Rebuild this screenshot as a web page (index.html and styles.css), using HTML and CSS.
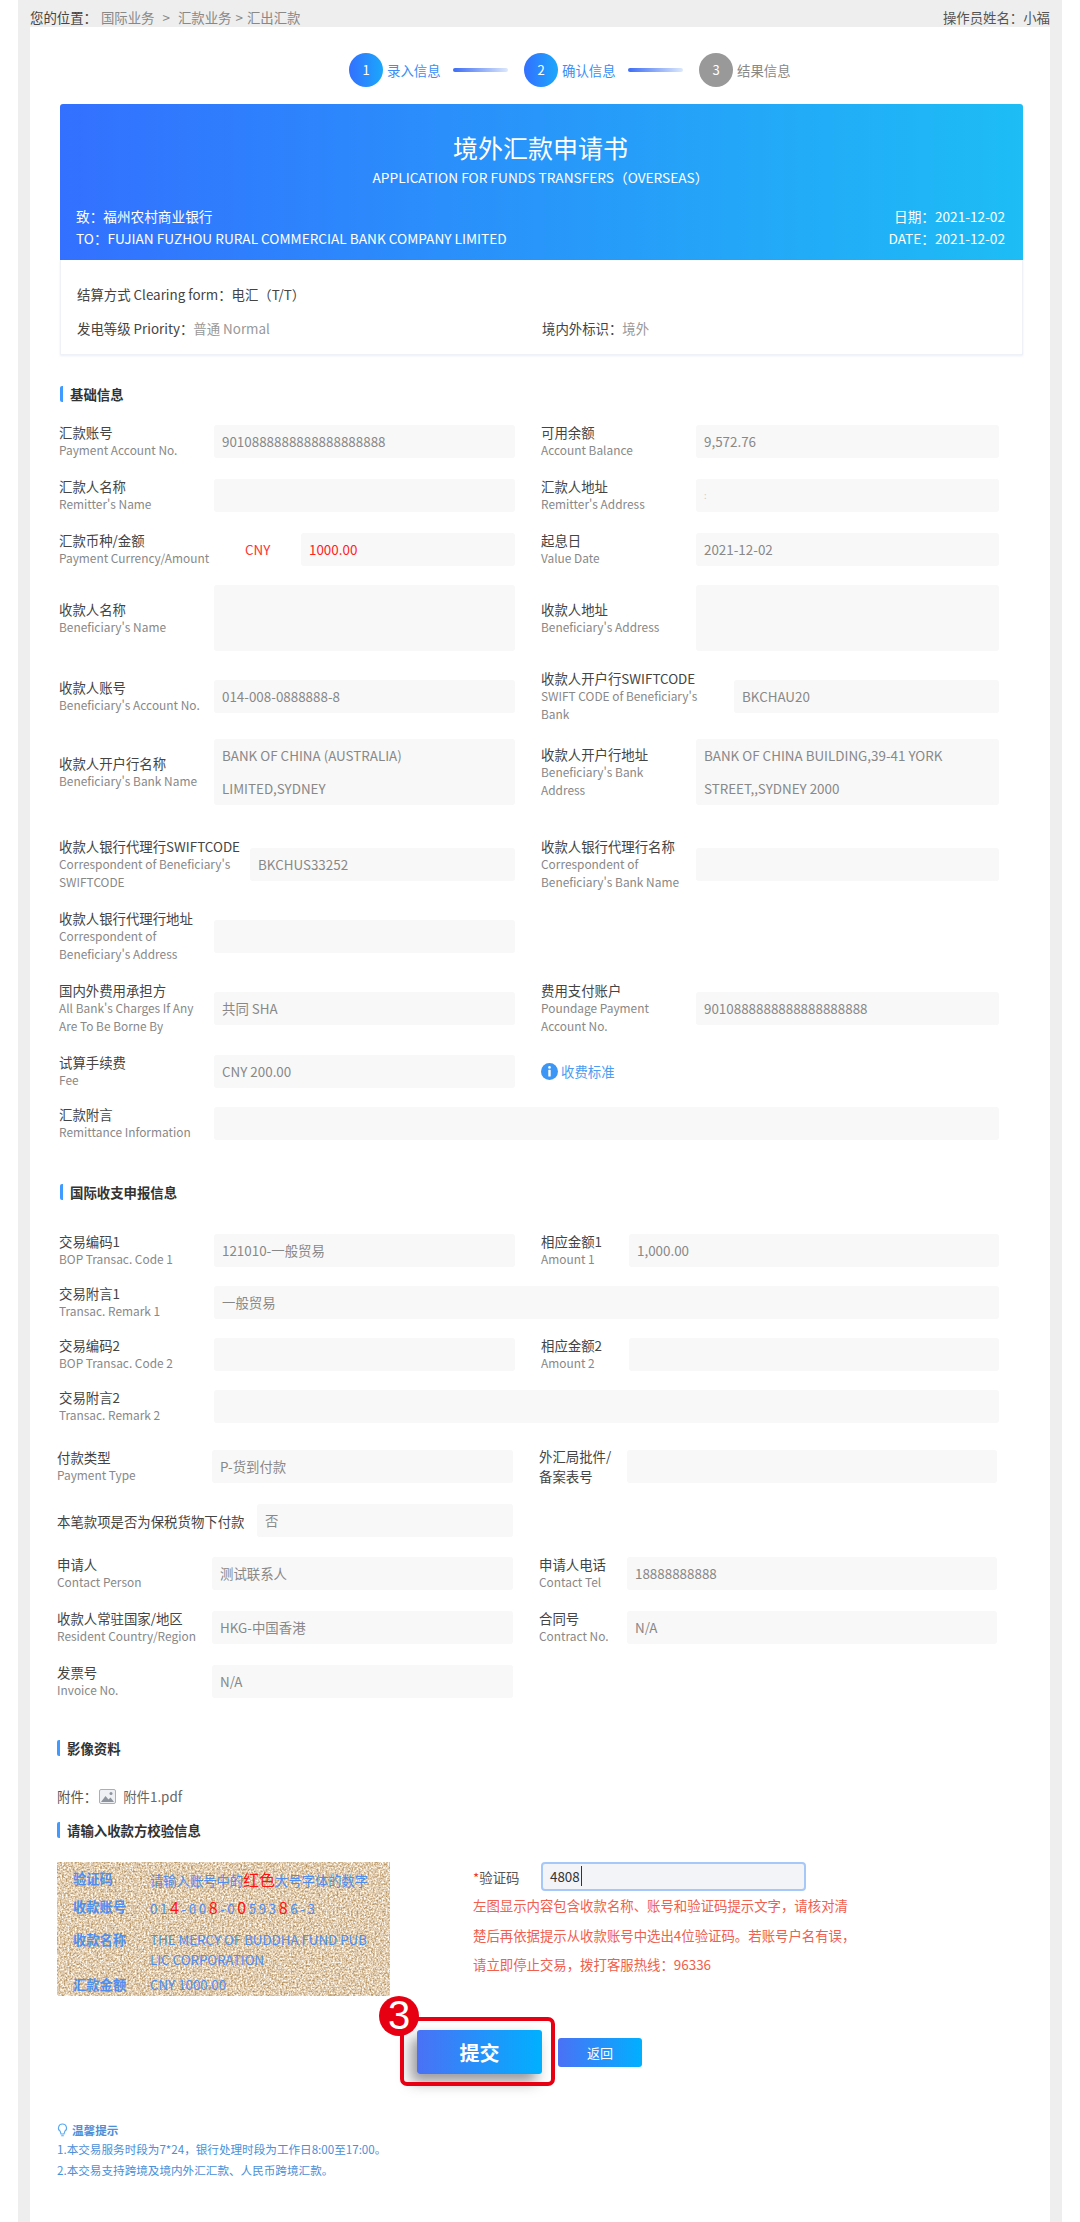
FILE: index.html
```html
<!DOCTYPE html>
<html lang="zh-CN">
<head>
  <meta charset="UTF-8">
  <title>境外汇款申请书</title>
  <link rel="stylesheet" href="styles.css">
</head>
<body>
<div class="page">
  <div class="topbar">
    <div class="crumbs"><b>您的位置：</b><span>国际业务</span><i>&gt;</i><span>汇款业务</span><i class="tight-sep">&gt;</i><span>汇出汇款</span></div>
    <div class="operator">操作员姓名：小福</div>
  </div>

  <div class="card">
    <!-- 步骤条 -->
    <div class="steps">
      <span class="step-num">1</span><span class="step-text">录入信息</span><span class="step-line"></span>
      <span class="step-num">2</span><span class="step-text">确认信息</span><span class="step-line"></span>
      <span class="step-num step-num-off">3</span><span class="step-text step-text-off">结果信息</span>
    </div>

    <!-- 申请书抬头 -->
    <div class="banner">
      <h1>境外汇款申请书</h1>
      <p class="banner-sub">APPLICATION FOR FUNDS TRANSFERS（OVERSEAS）</p>
      <div class="banner-line"><span>致：福州农村商业银行</span><span>日期：2021-12-02</span></div>
      <div class="banner-line"><span>TO：FUJIAN FUZHOU RURAL COMMERCIAL BANK COMPANY LIMITED</span><span>DATE：2021-12-02</span></div>
    </div>
    <div class="meta">
      <div class="meta-row">结算方式 Clearing form：电汇（T/T）</div>
      <div class="meta-row meta-two">
        <div>发电等级 Priority：<em>普通 Normal</em></div>
        <div>境内外标识：<em>境外</em></div>
      </div>
    </div>

    <!-- 基础信息 -->
    <h2 class="sec-title sec-basic">基础信息</h2>

    <div class="row">
      <div class="col"><div class="lbl">汇款账号<small>Payment Account No.</small></div><div class="field">9010888888888888888888</div></div>
      <div class="col col-r"><div class="lbl">可用余额<small>Account Balance</small></div><div class="field">9,572.76</div></div>
    </div>
    <div class="row">
      <div class="col"><div class="lbl">汇款人名称<small>Remitter's Name</small></div><div class="field"></div></div>
      <div class="col col-r"><div class="lbl">汇款人地址<small>Remitter's Address</small></div><div class="field field-faint">:</div></div>
    </div>
    <div class="row">
      <div class="col"><div class="lbl">汇款币种/金额<small>Payment Currency/Amount</small></div><div class="currency">CNY</div><div class="field field-red">1000.00</div></div>
      <div class="col col-r"><div class="lbl">起息日<small>Value Date</small></div><div class="field">2021-12-02</div></div>
    </div>
    <div class="row">
      <div class="col"><div class="lbl">收款人名称<small>Beneficiary's Name</small></div><div class="field field-tall"></div></div>
      <div class="col col-r"><div class="lbl">收款人地址<small>Beneficiary's Address</small></div><div class="field field-tall"></div></div>
    </div>
    <div class="row row-tight">
      <div class="col"><div class="lbl">收款人账号<small>Beneficiary's Account No.</small></div><div class="field">014-008-0888888-8</div></div>
      <div class="col col-r"><div class="lbl lbl-swift">收款人开户行SWIFTCODE<small>SWIFT CODE of Beneficiary's<br>Bank</small></div><div class="field">BKCHAU20</div></div>
    </div>
    <div class="row row-far">
      <div class="col"><div class="lbl">收款人开户行名称<small>Beneficiary's Bank Name</small></div><div class="field field-tall">BANK OF CHINA (AUSTRALIA)<br>LIMITED,SYDNEY</div></div>
      <div class="col col-r"><div class="lbl">收款人开户行地址<small>Beneficiary's Bank<br>Address</small></div><div class="field field-tall">BANK OF CHINA BUILDING,39-41 YORK<br>STREET,,SYDNEY 2000</div></div>
    </div>
    <div class="row">
      <div class="col"><div class="lbl lbl-corr">收款人银行代理行SWIFTCODE<small>Correspondent of Beneficiary's<br>SWIFTCODE</small></div><div class="field">BKCHUS33252</div></div>
      <div class="col col-r"><div class="lbl">收款人银行代理行名称<small>Correspondent of<br>Beneficiary's Bank Name</small></div><div class="field"></div></div>
    </div>
    <div class="row">
      <div class="col"><div class="lbl">收款人银行代理行地址<small>Correspondent of<br>Beneficiary's Address</small></div><div class="field"></div></div>
    </div>
    <div class="row">
      <div class="col"><div class="lbl">国内外费用承担方<small>All Bank's Charges If Any<br>Are To Be Borne By</small></div><div class="field">共同 SHA</div></div>
      <div class="col col-r"><div class="lbl">费用支付账户<small>Poundage Payment<br>Account No.</small></div><div class="field">9010888888888888888888</div></div>
    </div>
    <div class="row row-tight">
      <div class="col"><div class="lbl">试算手续费<small>Fee</small></div><div class="field">CNY 200.00</div></div>
      <div class="col col-r">
        <svg class="info-ico" viewBox="0 0 17 17"><circle cx="8.5" cy="8.5" r="8.5" fill="#3c96f5"/><circle cx="8.5" cy="4.4" r="1.3" fill="#fff"/><rect x="7.3" y="6.8" width="2.4" height="6.8" rx=".6" fill="#fff"/></svg>
        <span class="fee-link">收费标准</span>
      </div>
    </div>
    <div class="row">
      <div class="col col-full"><div class="lbl">汇款附言<small>Remittance Information</small></div><div class="field"></div></div>
    </div>

    <!-- 国际收支申报信息 -->
    <h2 class="sec-title sec-bop">国际收支申报信息</h2>

    <div class="row row-tight">
      <div class="col"><div class="lbl">交易编码1<small>BOP Transac. Code 1</small></div><div class="field">121010-一般贸易</div></div>
      <div class="col col-r"><div class="lbl lbl-short">相应金额1<small>Amount 1</small></div><div class="field">1,000.00</div></div>
    </div>
    <div class="row row-tight">
      <div class="col col-full"><div class="lbl">交易附言1<small>Transac. Remark 1</small></div><div class="field">一般贸易</div></div>
    </div>
    <div class="row row-tight">
      <div class="col"><div class="lbl">交易编码2<small>BOP Transac. Code 2</small></div><div class="field"></div></div>
      <div class="col col-r"><div class="lbl lbl-short">相应金额2<small>Amount 2</small></div><div class="field"></div></div>
    </div>
    <div class="row row-last">
      <div class="col col-full"><div class="lbl">交易附言2<small>Transac. Remark 2</small></div><div class="field"></div></div>
    </div>

    <div class="shifted">
      <div class="row">
        <div class="col"><div class="lbl">付款类型<small>Payment Type</small></div><div class="field">P-货到付款</div></div>
        <div class="col col-r"><div class="lbl lbl-short lbl-pair">外汇局批件/<br>备案表号</div><div class="field"></div></div>
      </div>
      <div class="row">
        <div class="col"><div class="lbl lbl-bonded">本笔款项是否为保税货物下付款</div><div class="field">否</div></div>
      </div>
      <div class="row">
        <div class="col"><div class="lbl">申请人<small>Contact Person</small></div><div class="field">测试联系人</div></div>
        <div class="col col-r"><div class="lbl lbl-short">申请人电话<small>Contact Tel</small></div><div class="field">18888888888</div></div>
      </div>
      <div class="row">
        <div class="col"><div class="lbl">收款人常驻国家/地区<small>Resident Country/Region</small></div><div class="field">HKG-中国香港</div></div>
        <div class="col col-r"><div class="lbl lbl-short">合同号<small>Contract No.</small></div><div class="field">N/A</div></div>
      </div>
      <div class="row">
        <div class="col"><div class="lbl">发票号<small>Invoice No.</small></div><div class="field">N/A</div></div>
      </div>

      <!-- 影像资料 -->
      <h2 class="sec-title sec-images">影像资料</h2>
      <div class="attach">
        <span>附件：</span>
        <svg class="attach-ico" viewBox="0 0 17 15"><rect x=".5" y=".5" width="16" height="14" rx="1.5" fill="#eef0f3" stroke="#a9afb8"/><circle cx="12" cy="4.5" r="1.5" fill="#8d949e"/><path d="M2 13l4.500-6 3 3.500 2-2 3.500 4.500z" fill="#8d949e"/></svg>
        <span class="attach-name">附件1.pdf</span>
      </div>

      <!-- 校验信息 -->
      <h2 class="sec-title sec-check">请输入收款方校验信息</h2>
      <div class="verify">
        <div class="captcha">
          <svg class="captcha-bg" width="333" height="134">
            <filter id="sand" color-interpolation-filters="sRGB" x="0" y="0" width="100%" height="100%">
              <feTurbulence type="fractalNoise" baseFrequency="0.55" numOctaves="2" seed="4"/>
              <feColorMatrix values="0.6 0 0 0 0.58  0.8 0 0 0 0.4  1.1 0 0 0 0.14  0 0 0 0 1"/>
            </filter>
            <rect width="333" height="134" filter="url(#sand)"/>
          </svg>
          <div class="cap-row cap-first"><b>验证码</b><span>请输入账号中的<em class="big">红色</em>大号字体的数字</span></div>
          <div class="cap-row cap-acct"><b>收款账号</b><span class="digits">01<em class="big">4</em>-00<em class="big">8</em>-0<em class="big">0</em>593<em class="big">8</em>6-3</span></div>
          <div class="cap-row cap-name"><b>收款名称</b><span>THE MERCY OF BUDDHA FUND PUB<br>LIC CORPORATION</span></div>
          <div class="cap-row cap-sum"><b>汇款金额</b><span>CNY 1000.00</span></div>
        </div>
        <div class="verify-form">
          <div class="code-row">
            <label class="code-label"><i>*</i>验证码</label>
            <div class="code-input"><span class="caret">4808</span></div>
          </div>
          <p class="warn">左图显示内容包含收款名称、账号和验证码提示文字，请核对清<br>楚后再依据提示从收款账号中选出4位验证码。若账号户名有误，<br>请立即停止交易，拨打客服热线：96336</p>
        </div>
      </div>

      <div class="actions">
        <button class="btn btn-main">提交</button>
        <button class="btn btn-back">返回</button>
        <!-- 教程标注 -->
        <span class="mark-box"></span>
        <span class="mark-num">3</span>
      </div>

      <div class="tips">
        <div class="tips-title">
          <svg class="bulb" viewBox="0 0 11 14"><path d="M5.500 1a4 4 0 0 0-2.300 7.300l.8 2.700h3l.8-2.700A4 4 0 0 0 5.500 1zM4.200 12.800h2.600" fill="none" stroke="#5aa9ee" stroke-width="1.100"/></svg>
          <b>温馨提示</b>
        </div>
        <p>1.本交易服务时段为7*24，银行处理时段为工作日8:00至17:00。</p>
        <p>2.本交易支持跨境及境内外汇汇款、人民币跨境汇款。</p>
      </div>
    </div>
  </div>
</div>
</body>
</html>
```

FILE: styles.css
```css
* {
  margin: 0;
  padding: 0;
  box-sizing: border-box;
}

body {
  background: #fff;
  color: #444;
  font-family: "Noto Sans CJK SC", "Noto Sans", sans-serif;
  font-size: 13.4px;
}

.page {
  width: 1044px;
  height: 2222px;
  margin-left: 18px;
  padding: 0 12px;
  background: #eee;
  overflow: hidden;
}

.topbar {
  display: flex;
  justify-content: space-between;
  height: 27px;
  padding-top: 7px;
  line-height: 20px;
  font-size: 13.4px;
  color: #555;
}

.crumbs b {
  margin-right: 4px;
  font-weight: 400;
  color: #444;
}

.crumbs span {
  color: #888;
}

.crumbs i {
  margin: 0 8px;
  font-style: normal;
  color: #888;
}

.crumbs .tight-sep {
  margin: 0 4px;
}

.card {
  height: 2195px;
  padding: 26px 0 0 29px;
  background: #fff;
}

/* steps */
.steps {
  display: flex;
  align-items: center;
  height: 34px;
  margin-left: 290px;
}

.step-num {
  flex: none;
  width: 34px;
  height: 34px;
  line-height: 34px;
  border-radius: 50%;
  text-align: center;
  font-size: 13px;
  color: #fff;
  background: linear-gradient(90deg, #3370ff, #1aa8fb);
}

.step-num-off {
  background: #999;
}

.step-text {
  width: 54px;
  margin-left: 4px;
  color: #3a8ef6;
  white-space: nowrap;
}

.step-text-off {
  color: #888;
}

.step-line {
  width: 55px;
  height: 4px;
  margin: 0 16px 0 12px;
  border-radius: 2px;
  background: linear-gradient(90deg, #3d6df5, #dce8fb);
}

/* banner */
.banner {
  width: 963px;
  height: 156px;
  margin: 17px 0 0 1px;
  padding: 26px 18px 0 16px;
  border-radius: 3px 3px 0 0;
  color: #fff;
  background: linear-gradient(90deg, #3370ff, #1dbdf5);
}

.banner h1 {
  font-size: 25px;
  font-weight: 400;
  line-height: 34px;
  text-align: center;
}

.banner-sub {
  margin: 3px 0 18px;
  line-height: 20px;
  font-size: 13.7px;
  text-align: center;
}

.banner-line {
  display: flex;
  justify-content: space-between;
  line-height: 22px;
  font-size: 13.65px;
}

.meta {
  width: 963px;
  height: 95px;
  margin-left: 1px;
  padding: 24px 16px 0;
  border: 1px solid #eef1f7;
  border-top: 0;
  box-shadow: 0 1px 2px rgba(120, 140, 190, 0.15);
}

.meta-row {
  line-height: 20px;
}

.meta-two {
  display: flex;
  margin-top: 14px;
}

.meta-two div:first-child {
  width: 465px;
}

.meta em {
  font-style: normal;
  color: #999;
}

/* section title */
.sec-title {
  height: 16px;
  padding-left: 7px;
  border-left: 3px solid #3f9bff;
  border-radius: 2px;
  line-height: 16px;
  font-size: 13.4px;
  font-weight: 700;
  color: #333;
}

.sec-basic {
  margin: 31px 0 21px 1px;
}

.sec-bop {
  margin: 43px 0 32px 1px;
}

.sec-images {
  margin: 41px 0 31px;
}

.sec-check {
  margin: 17px 0 24px;
}

/* form rows */
.row {
  display: flex;
  align-items: center;
  margin-bottom: 18px;
}

.row-tight {
  margin-bottom: 16px;
}

.row-far {
  margin-bottom: 32px;
}

.row-last {
  margin-bottom: 22px;
}

.col {
  display: flex;
  align-items: center;
  flex: 0 0 456px;
}

.col-r {
  flex-basis: 458px;
  margin-left: 26px;
}

.col-full {
  flex: 0 0 940px;
}

.lbl {
  flex: 0 0 155px;
  line-height: 18px;
  white-space: nowrap;
  color: #444;
}

.lbl small {
  display: block;
  font-size: 11.9px;
  color: #888;
}

.lbl-swift {
  flex-basis: 193px;
}

.lbl-corr {
  flex-basis: 191px;
}

.lbl-short {
  flex-basis: 88px;
}

.lbl-pair {
  line-height: 20px;
}

.lbl-bonded {
  flex-basis: 200px;
}

.field {
  flex: 1;
  min-height: 33px;
  padding: 0 8px;
  border-radius: 3px;
  background: #f8f8f8;
  line-height: 33px;
  color: #888;
  white-space: nowrap;
}

.field-tall {
  min-height: 66px;
}

.field-red {
  color: #f22;
}

.field-faint {
  color: #ccc;
  font-size: 9px;
}

.currency {
  flex: 0 0 151px;
  margin-left: -64px;
  padding-left: 95px;
  color: #f33;
  white-space: nowrap;
}

.info-ico {
  width: 17px;
  height: 17px;
  margin-right: 3px;
}

.fee-link {
  color: #4a9df2;
}

.shifted {
  margin-left: -2px;
}

/* attachment */
.attach {
  display: flex;
  align-items: center;
  height: 18px;
  color: #555;
}

.attach-ico {
  width: 17px;
  height: 15px;
  margin: 0 7px 0 2px;
}

.attach-name {
  color: #666;
}

/* verify block */
.verify {
  display: flex;
  height: 134px;
}

.captcha {
  position: relative;
  flex: 0 0 333px;
  height: 134px;
  padding: 7px 0 0 16px;
  overflow: hidden;
  color: #4f8df0;
  font-size: 13.3px;
}

.captcha-bg {
  position: absolute;
  top: 0;
  left: 0;
}

.cap-row {
  position: relative;
  display: flex;
  line-height: 20px;
  white-space: nowrap;
}

.cap-row b {
  flex: 0 0 77px;
  font-weight: 700;
}

.cap-acct {
  margin-top: 6px;
}

.cap-name {
  margin-top: 11px;
}

.cap-sum {
  margin-top: 5px;
}

.big {
  font-size: 16px;
  font-style: normal;
  color: #f11;
}

.digits {
  letter-spacing: 2.6px;
}

.verify-form {
  margin-left: 83px;
}

.code-row {
  display: flex;
  align-items: center;
}

.code-label {
  width: 68px;
  color: #555;
}

.code-label i {
  font-style: normal;
  color: #e33;
}

.code-input {
  width: 265px;
  height: 29px;
  padding: 0 7px;
  border: 2px solid #a6c8f8;
  border-radius: 4px;
  background: #f2f4f7;
  line-height: 25px;
  color: #333;
}

.caret {
  padding-right: 1px;
  border-right: 1px solid #333;
}

.warn {
  line-height: 29.5px;
  color: #f0604e;
  white-space: nowrap;
}

/* buttons */
.actions {
  position: relative;
  display: flex;
  align-items: center;
  gap: 16px;
  height: 44px;
  margin: 34px 0 0 360px;
}

.btn {
  border: 0;
  border-radius: 3px;
  color: #fff;
  font-family: inherit;
  background: linear-gradient(90deg, #4a71f5, #00b0ff);
}

.btn-main {
  width: 125px;
  height: 44px;
  font-size: 20px;
  font-weight: 700;
  box-shadow: -6px 8px 14px rgba(50, 50, 60, 0.5);
}

.btn-back {
  width: 84px;
  height: 29px;
  font-size: 13px;
}

.mark-box {
  position: absolute;
  top: -13px;
  left: -17px;
  width: 155px;
  height: 69px;
  border: 4px solid #e60012;
  border-radius: 7px;
}

.mark-num {
  position: absolute;
  top: -34px;
  left: -38px;
  width: 40px;
  height: 40px;
  border-radius: 50%;
  background: #e60012;
  line-height: 39px;
  text-align: center;
  font-family: "Liberation Sans", sans-serif;
  font-size: 40px;
  color: #fff;
}

/* tips */
.tips {
  margin-top: 47px;
  font-size: 11.6px;
  color: #4a8fd8;
}

.tips-title {
  display: flex;
  align-items: center;
  line-height: 18px;
}

.bulb {
  width: 11px;
  height: 14px;
  margin-right: 4px;
}

.tips p {
  line-height: 20.5px;
}
```
